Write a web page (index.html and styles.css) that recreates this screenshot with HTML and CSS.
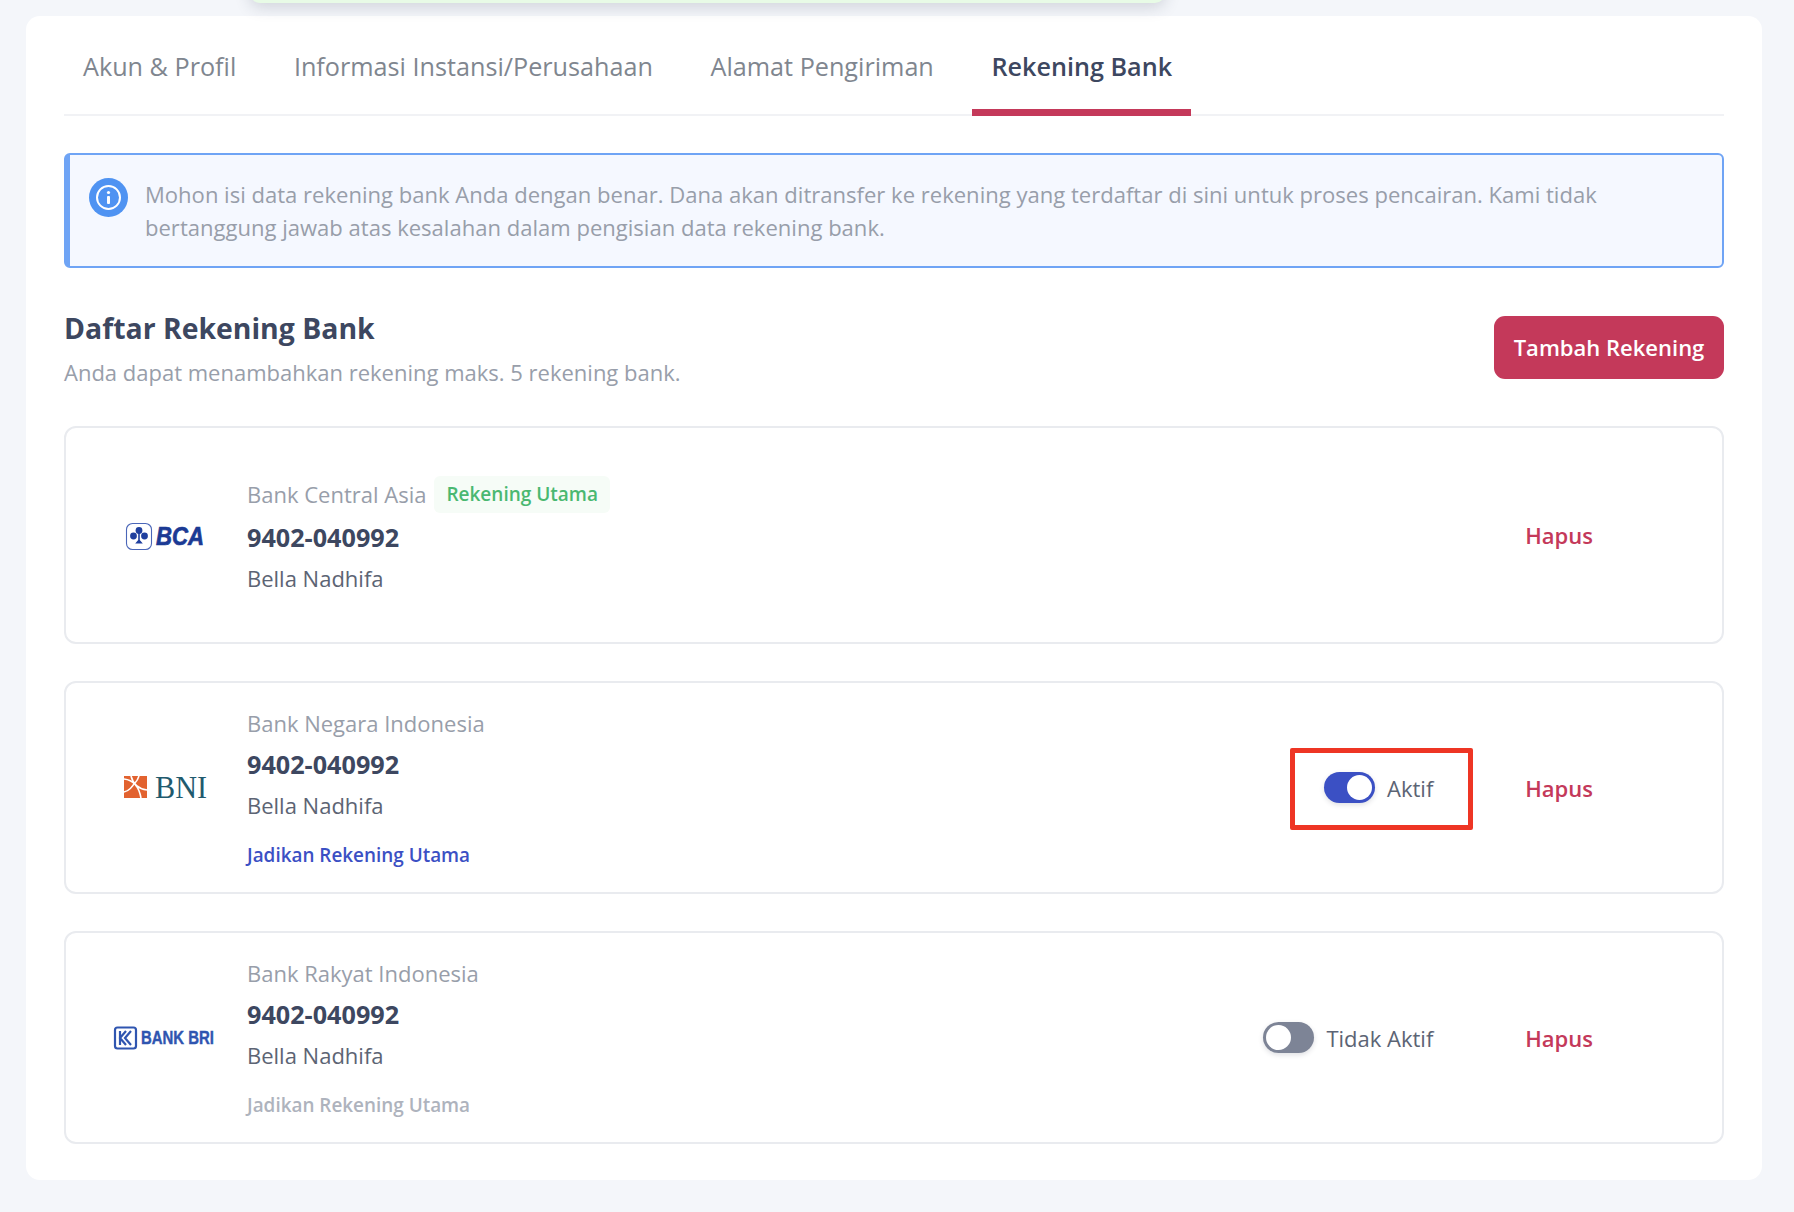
FILE: index.html
```html
<!DOCTYPE html>
<html lang="id">
<head>
    <meta charset="UTF-8">
    <title>Rekening Bank</title>
    <link rel="stylesheet" href="styles.css">
</head>
<body>
    <div class="toast"></div>

    <main class="panel">
        <nav class="tabs">
            <a class="tab">Akun &amp; Profil</a>
            <a class="tab">Informasi Instansi/Perusahaan</a>
            <a class="tab">Alamat Pengiriman</a>
            <a class="tab tab-active">Rekening Bank</a>
        </nav>

        <div class="notice">
            <svg class="notice-icon" viewBox="0 0 39 39" width="39" height="39">
                <circle cx="19.5" cy="19.5" r="19.5" fill="#4f93f2"/>
                <circle cx="19.5" cy="19.5" r="11.5" fill="none" stroke="#fff" stroke-width="2"/>
                <circle cx="19.5" cy="14.5" r="1.6" fill="#fff"/>
                <rect x="18" y="18" width="3" height="8" rx="1" fill="#fff"/>
            </svg>
            <p class="notice-text">Mohon isi data rekening bank Anda dengan benar. Dana akan ditransfer ke rekening yang terdaftar di sini untuk proses pencairan. Kami tidak bertanggung jawab atas kesalahan dalam pengisian data rekening bank.</p>
        </div>

        <div class="list-head">
            <div>
                <h2 class="list-title">Daftar Rekening Bank</h2>
                <p class="list-sub">Anda dapat menambahkan rekening maks. 5 rekening bank.</p>
            </div>
            <button class="btn-add">Tambah Rekening</button>
        </div>

        <section class="bank-card bank-card-main">
            <svg class="bank-logo" viewBox="0 2 130 40" width="130" height="40">
                <rect x="26.5" y="7.5" width="25" height="26" rx="6" fill="none" stroke="#4a66b8" stroke-width="1.1"/>
                <circle cx="39" cy="14.5" r="3.4" fill="#1f3f9e"/>
                <circle cx="33.5" cy="20" r="3.4" fill="#1f3f9e"/>
                <circle cx="44.5" cy="20" r="3.4" fill="#1f3f9e"/>
                <path d="M38.200 16h1.600v8l3 3.500h-7.600l3-3.500z" fill="#1f3f9e"/>
                <text class="logo-bca" x="56" y="29" textLength="48" lengthAdjust="spacingAndGlyphs">BCA</text>
            </svg>
            <div class="bank-info">
                <div class="bank-name-row">
                    <span class="bank-name">Bank Central Asia</span>
                    <span class="badge-main">Rekening Utama</span>
                </div>
                <div class="bank-number">9402-040992</div>
                <div class="bank-holder">Bella Nadhifa</div>
            </div>
            <div class="bank-actions">
                <a class="link-delete">Hapus</a>
            </div>
        </section>

        <section class="bank-card">
            <svg class="bank-logo" viewBox="0 2 130 40" width="130" height="40">
                <rect x="24" y="9" width="23" height="22" fill="#e2622f"/>
                <path d="M24 12c9 1 15 8 17 19M31 9c2 8 8 13 16 14M24 25c5-1 9-6 11-10M39 9c-1 3-2 5-4 7" fill="none" stroke="#fff" stroke-width="1.6"/>
                <text class="logo-bni" x="55" y="31" textLength="52" lengthAdjust="spacingAndGlyphs">BNI</text>
            </svg>
            <div class="bank-info">
                <div class="bank-name-row">
                    <span class="bank-name">Bank Negara Indonesia</span>
                </div>
                <div class="bank-number">9402-040992</div>
                <div class="bank-holder">Bella Nadhifa</div>
                <a class="link-primary">Jadikan Rekening Utama</a>
            </div>
            <div class="bank-actions">
                <div class="status">
                    <span class="toggle toggle-on"><span class="toggle-knob"></span></span>
                    <span class="status-label">Aktif</span>
                    <span class="highlight"></span>
                </div>
                <a class="link-delete">Hapus</a>
            </div>
        </section>

        <section class="bank-card">
            <svg class="bank-logo" viewBox="0 2 130 40" width="130" height="40">
                <rect x="15" y="10.5" width="21" height="21" rx="2.5" fill="none" stroke="#2f55b0" stroke-width="2.2"/>
                <path d="M20 14v14M31 14l-6 7 6 7M26 14l-6 7 6 7" fill="none" stroke="#2f55b0" stroke-width="2.2"/>
                <text class="logo-bri" x="41" y="26.5" textLength="73" lengthAdjust="spacingAndGlyphs">BANK BRI</text>
            </svg>
            <div class="bank-info">
                <div class="bank-name-row">
                    <span class="bank-name">Bank Rakyat Indonesia</span>
                </div>
                <div class="bank-number">9402-040992</div>
                <div class="bank-holder">Bella Nadhifa</div>
                <a class="link-primary link-disabled">Jadikan Rekening Utama</a>
            </div>
            <div class="bank-actions">
                <div class="status">
                    <span class="toggle"><span class="toggle-knob"></span></span>
                    <span class="status-label">Tidak Aktif</span>
                </div>
                <a class="link-delete">Hapus</a>
            </div>
        </section>
    </main>
</body>
</html>
```

FILE: styles.css
```css
:root {
    --bg: #f4f6fa; --text: #3d4760; --muted: #989eaa; --tab: #80868f;
    --red: #c4395a; --blue: #3b50c4; --line: #e9ebef;
}
* { box-sizing: border-box; }
html, body { height: 100%; }
body { background: var(--bg); color: var(--text); font-family: "Open Sans", sans-serif; margin: 0; padding: 16px 32px 32px 26px; overflow: hidden; }
p, h2 { margin: 0; }

.toast { position: absolute; top: -40px; left: 250px; width: 915px; height: 43px; background: #e8fbe6; border-radius: 10px; box-shadow: 0 4px 16px rgba(40,50,70,0.18); z-index: 2; }

.panel { background: #fff; border-radius: 14px; padding: 0 38px 38px; height: 1164px; }

/* tabs */
.tabs { display: flex; gap: 19.6px; height: 100px; border-bottom: 2px solid #f1f2f5; }
.tab { position: relative; height: 100px; padding: 32.5px 19px 0; font-size: 25.2px; line-height: 34px; color: var(--tab); white-space: nowrap; }
.tab-active { color: var(--text); font-weight: 600; }
.tab-active::after { content: ""; position: absolute; left: 0; right: 0; bottom: 0; height: 7px; background: var(--red); }

/* notice */
.notice { display: flex; gap: 17px; height: 115px; margin-top: 37px; padding: 23px 24px 0 19px; background: #f5f8ff; border: 2px solid #6fa4f5; border-left-width: 6px; border-radius: 6px; }
.notice-icon { flex: none; }
.notice-text { font-size: 22.05px; line-height: 33px; color: var(--muted); }

/* list head */
.list-head { display: flex; justify-content: space-between; align-items: flex-start; margin-top: 47px; height: 111px; }
.list-title { font-size: 28.4px; line-height: 36px; font-weight: 700; color: var(--text); margin-top: -5px; }
.list-sub { font-size: 22px; line-height: 30px; color: var(--muted); margin-top: 11px; }
.btn-add { width: 230px; height: 63px; margin-top: 1px; padding-bottom: 3px; background: var(--red); color: #fff; border: none; border-radius: 11px; font-family: "Open Sans", sans-serif; font-size: 22px; font-weight: 600; }

/* bank cards */
.bank-card { display: flex; align-items: center; padding: 24px 129px 22px 34px; margin-bottom: 37px; border: 2px solid var(--line); border-radius: 12px; }
.bank-card:last-child { margin-bottom: 0; }
.bank-card-main { padding-top: 48px; padding-bottom: 43px; }
.bank-logo { flex: none; margin-right: 17px; }
.bank-info { display: flex; flex-direction: column; align-items: flex-start; }
.bank-name-row { display: flex; align-items: center; gap: 8px; min-height: 33px; }
.bank-name { font-size: 22px; line-height: 33px; color: var(--muted); }
.badge-main { height: 37px; padding: 0 12px; background: #f6fcf7; border-radius: 6px; font-size: 19px; line-height: 37px; font-weight: 600; color: #4ab871; }
.bank-number { font-size: 25.2px; line-height: 41px; font-weight: 700; color: var(--text); margin-top: 4px; }
.bank-holder { font-size: 22px; line-height: 41px; color: #5c6474; }
.link-primary { font-size: 18.9px; line-height: 30px; font-weight: 600; color: var(--blue); margin-top: 14px; }
.link-disabled { color: #aeb3bd; }

.logo-bca { font-family: "Liberation Sans", sans-serif; font-size: 26px; font-weight: 700; font-style: italic; fill: #1b3a94; stroke: #1b3a94; stroke-width: 0.7; }
.logo-bni { font-family: "Liberation Serif", serif; font-size: 32px; fill: #1f5a6e; }
.logo-bri { font-family: "Liberation Sans", sans-serif; font-size: 18px; font-weight: 700; fill: #2f55b0; stroke: #2f55b0; stroke-width: 0.4; }

/* right side */
.bank-actions { display: flex; align-items: center; gap: 92px; margin-left: auto; margin-bottom: 2px; }
.bank-card-main .bank-actions { margin-bottom: 5px; }
.status { position: relative; display: flex; align-items: center; gap: 12px; }
.status-label { font-size: 22px; color: #5c6474; }
.toggle { display: flex; width: 51px; height: 31px; padding: 3px; border-radius: 16px; background: #7d8496; box-shadow: 0 2px 5px rgba(40,50,70,0.15); }
.toggle-on { justify-content: flex-end; background: var(--blue); }
.toggle-knob { width: 25px; height: 25px; border-radius: 50%; background: #fff; }
.link-delete { font-size: 22px; font-weight: 600; color: var(--red); }

.highlight { position: absolute; left: -34px; right: -40px; top: -24px; bottom: -27px; border: 5px solid #ee3524; border-radius: 2px; }
```
